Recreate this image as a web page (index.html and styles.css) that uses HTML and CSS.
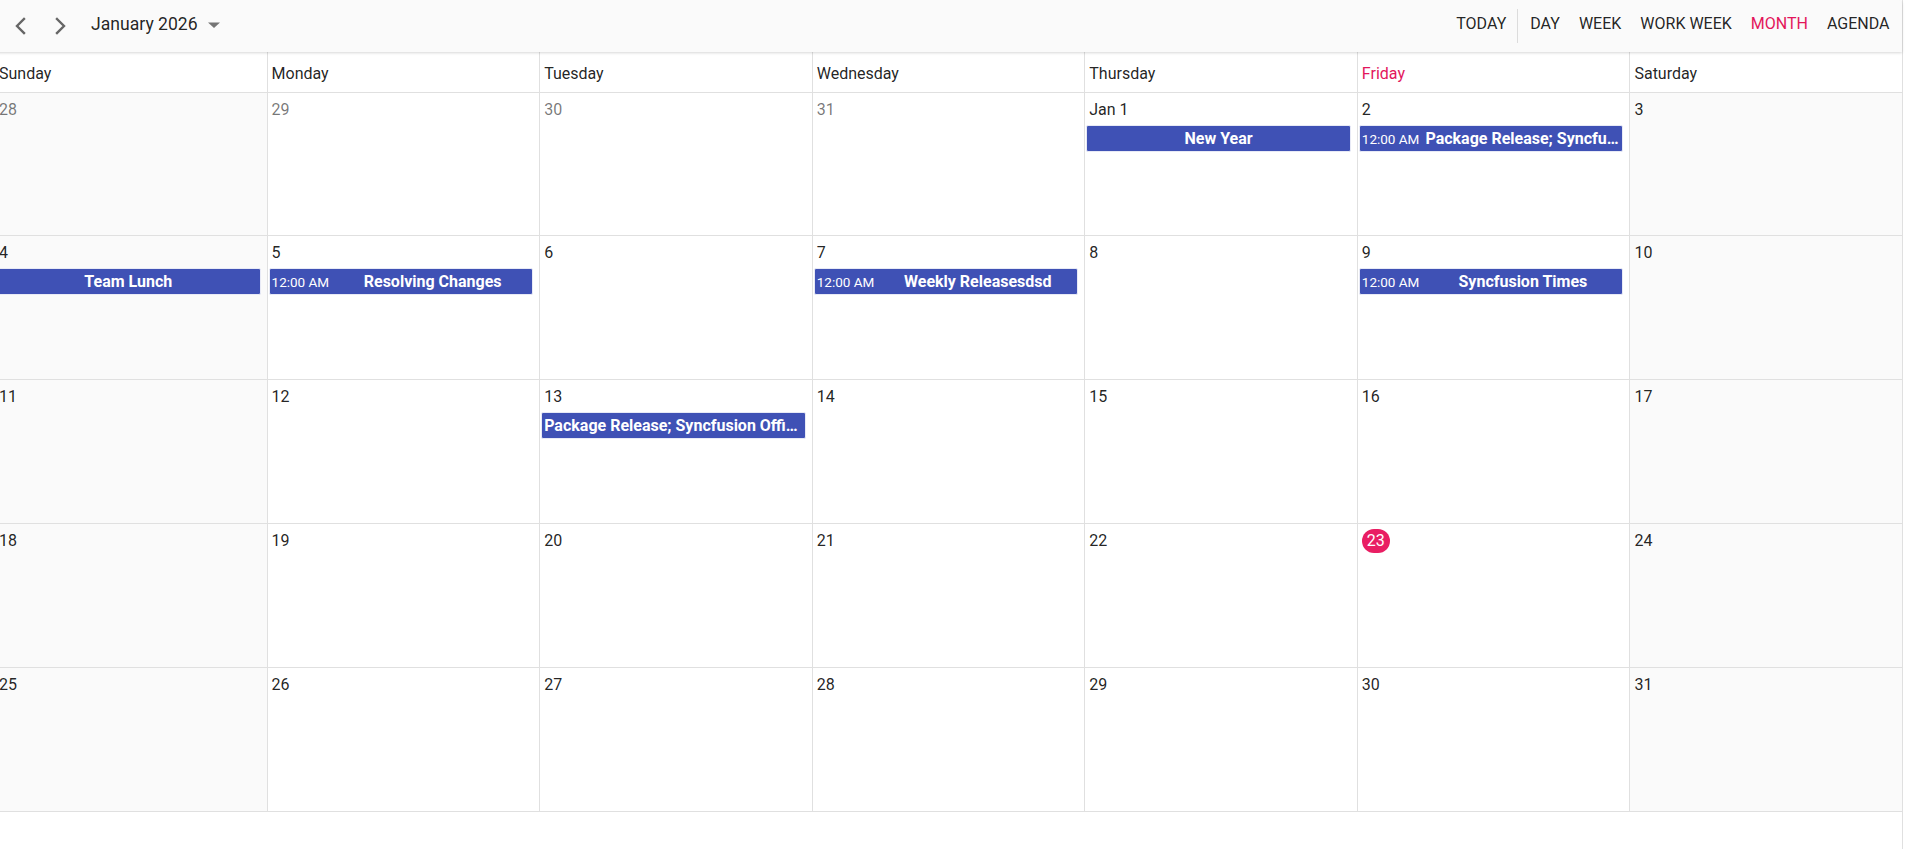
FILE: index.html
```html
<!DOCTYPE html>
<html lang="en">
<head>
<meta charset="utf-8">
<title>Scheduler - Month</title>
<link rel="stylesheet" href="styles.css">
</head>
<body>
<div class="scheduler">
  <div class="toolbar">
    <div class="tb-left">
      <button class="nav" aria-label="Previous">
        <svg width="16" height="18" viewBox="0 0 16 18"><polyline points="12,2 5,9 12,16" fill="none" stroke="#666" stroke-width="2.4" stroke-linecap="square"/></svg>
      </button>
      <button class="nav" aria-label="Next">
        <svg width="16" height="18" viewBox="0 0 16 18"><polyline points="4,2 11,9 4,16" fill="none" stroke="#666" stroke-width="2.4" stroke-linecap="square"/></svg>
      </button>
      <div class="range">
        <span>January 2026</span>
        <svg class="caret" width="14" height="8" viewBox="0 0 14 8"><polygon points="1,1.5 13,1.5 7,7" fill="#757575"/></svg>
      </div>
    </div>
    <div class="tb-right">
      <button class="tbtn">TODAY</button>
      <span class="sep"></span>
      <button class="tbtn">DAY</button>
      <button class="tbtn">WEEK</button>
      <button class="tbtn">WORK WEEK</button>
      <button class="tbtn active">MONTH</button>
      <button class="tbtn">AGENDA</button>
    </div>
  </div>

  <div class="header-row">
    <div class="hcell">Sunday</div>
    <div class="hcell">Monday</div>
    <div class="hcell">Tuesday</div>
    <div class="hcell">Wednesday</div>
    <div class="hcell">Thursday</div>
    <div class="hcell today-head">Friday</div>
    <div class="hcell">Saturday</div>
  </div>

  <div class="month-grid">
    <!-- week 1 -->
    <div class="cell weekend"><div class="date other">28</div></div>
    <div class="cell"><div class="date other">29</div></div>
    <div class="cell"><div class="date other">30</div></div>
    <div class="cell"><div class="date other">31</div></div>
    <div class="cell"><div class="date">Jan 1</div>
      <div class="event"><span class="subject">New Year</span></div></div>
    <div class="cell"><div class="date">2</div>
      <div class="event"><span class="time">12:00 AM</span><span class="subject">Package Release; Syncfusion Office Holiday</span></div></div>
    <div class="cell weekend"><div class="date">3</div></div>
    <!-- week 2 -->
    <div class="cell weekend"><div class="date">4</div>
      <div class="event"><span class="subject">Team Lunch</span></div></div>
    <div class="cell"><div class="date">5</div>
      <div class="event"><span class="time">12:00 AM</span><span class="subject">Resolving Changes</span></div></div>
    <div class="cell"><div class="date">6</div></div>
    <div class="cell"><div class="date">7</div>
      <div class="event"><span class="time">12:00 AM</span><span class="subject">Weekly Releasesdsd</span></div></div>
    <div class="cell"><div class="date">8</div></div>
    <div class="cell"><div class="date">9</div>
      <div class="event"><span class="time">12:00 AM</span><span class="subject">Syncfusion Times</span></div></div>
    <div class="cell weekend"><div class="date">10</div></div>
    <!-- week 3 -->
    <div class="cell weekend"><div class="date">11</div></div>
    <div class="cell"><div class="date">12</div></div>
    <div class="cell"><div class="date">13</div>
      <div class="event"><span class="subject">Package Release; Syncfusion Office Holiday</span></div></div>
    <div class="cell"><div class="date">14</div></div>
    <div class="cell"><div class="date">15</div></div>
    <div class="cell"><div class="date">16</div></div>
    <div class="cell weekend"><div class="date">17</div></div>
    <!-- week 4 -->
    <div class="cell weekend"><div class="date">18</div></div>
    <div class="cell"><div class="date">19</div></div>
    <div class="cell"><div class="date">20</div></div>
    <div class="cell"><div class="date">21</div></div>
    <div class="cell"><div class="date">22</div></div>
    <div class="cell"><div class="date"><span class="today">23</span></div></div>
    <div class="cell weekend"><div class="date">24</div></div>
    <!-- week 5 -->
    <div class="cell weekend"><div class="date">25</div></div>
    <div class="cell"><div class="date">26</div></div>
    <div class="cell"><div class="date">27</div></div>
    <div class="cell"><div class="date">28</div></div>
    <div class="cell"><div class="date">29</div></div>
    <div class="cell"><div class="date">30</div></div>
    <div class="cell weekend"><div class="date">31</div></div>
  </div>
</div>
</body>
</html>
```

FILE: styles.css
```css
* { box-sizing: border-box; }

html, body {
  margin: 0;
  padding: 0;
  background: #ffffff;
  overflow: hidden;
}

body {
  font-family: Roboto, "Liberation Sans", Arial, sans-serif;
  color: rgba(0, 0, 0, 0.87);
  height: 849px;
}

.scheduler {
  margin-left: -6px;
  width: 1909px;
  height: 849px;
  border-right: 1px solid #e0e0e0;
  display: flex;
  flex-direction: column;
}

/* ---------- toolbar ---------- */
.toolbar {
  height: 52px;
  flex: none;
  background: #fafafa;
  border-top-right-radius: 4px;
  box-shadow: 0 1px 3px rgba(0, 0, 0, 0.16);
  position: relative;
  z-index: 2;
  display: flex;
  align-items: center;
  justify-content: space-between;
  padding: 0 3px 4px 8px;
}

.tb-left {
  display: flex;
  align-items: center;
  gap: 5px;
}

.nav {
  width: 36px;
  height: 36px;
  border: 0;
  background: transparent;
  padding: 0;
  margin-top: 3px;
  display: flex;
  align-items: center;
  justify-content: center;
  cursor: pointer;
}

.range {
  margin-left: 7px;
  display: flex;
  align-items: center;
  font-size: 17.6px;
  color: rgba(0, 0, 0, 0.87);
}

.caret {
  margin-left: 9px;
  margin-top: 2px;
}

.tb-right {
  display: flex;
  align-items: center;
}

.tbtn {
  border: 0;
  background: transparent;
  font-family: Roboto, "Liberation Sans", Arial, sans-serif;
  font-size: 16px;
  line-height: 20px;
  color: rgba(0, 0, 0, 0.87);
  padding: 0 9.5px;
  height: 36px;
  cursor: pointer;
}

.tbtn.active {
  color: #e3165b;
}

.sep {
  width: 1px;
  height: 34px;
  background: #dcdcdc;
  margin: 4px 3px 0 1px;
}

/* ---------- header ---------- */
.header-row {
  height: 41px;
  flex: none;
  display: grid;
  grid-template-columns: repeat(7, 1fr);
  border-bottom: 1px solid #e0e0e0;
  background: #ffffff;
}

.hcell {
  border-left: 1px solid #e0e0e0;
  padding: 3px 4px 0 4px;
  display: flex;
  align-items: center;
  font-size: 16px;
  color: rgba(0, 0, 0, 0.87);
}

.hcell.today-head {
  color: #e3165b;
}

/* ---------- month grid ---------- */
.month-grid {
  flex: none;
  display: grid;
  grid-template-columns: repeat(7, 1fr);
  grid-template-rows: 143px 143.5px 144px 144px 144px;
}

.cell {
  border-left: 1px solid #e0e0e0;
  border-bottom: 1px solid #e0e0e0;
  background: #ffffff;
  padding-top: 7px;
  min-width: 0;
  overflow: hidden;
}

.cell.weekend {
  background: #fafafa;
}

.date {
  height: 20px;
  display: flex;
  align-items: center;
  padding-left: 4px;
  font-size: 16px;
  line-height: 20px;
  color: rgba(0, 0, 0, 0.87);
}

.date.other {
  color: rgba(0, 0, 0, 0.54);
}

.today {
  display: inline-block;
  height: 24px;
  line-height: 24px;
  padding: 0 5px;
  border-radius: 12px;
  background: #e91e63;
  color: #ffffff;
}

.event {
  margin: 5px 6px 0 1px;
  height: 27px;
  background: #3f51b5;
  border: 1px solid #e8eaf6;
  border-radius: 2px;
  color: #ffffff;
  display: flex;
  align-items: center;
  padding: 0 2px;
  overflow: hidden;
}

.time {
  flex: none;
  font-size: 13.5px;
  padding-right: 6px;
}

.subject {
  flex: 1;
  min-width: 0;
  font-size: 16px;
  font-weight: 700;
  text-align: center;
  white-space: nowrap;
  overflow: hidden;
  text-overflow: ellipsis;
}
```
